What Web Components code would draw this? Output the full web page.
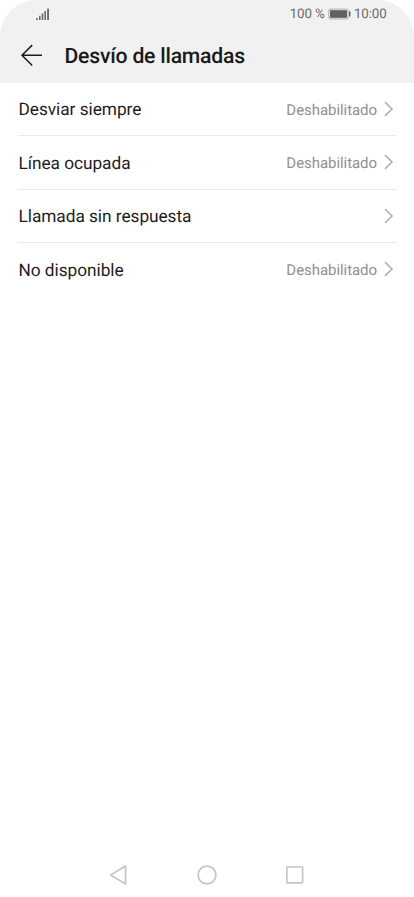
<!DOCTYPE html>
<html lang="es">
<head>
<meta charset="utf-8">
<meta name="viewport" content="width=device-width">
<title>Desvío de llamadas</title>
<style>
html, body { margin: 0; background: #fff; }
body { font-family: Roboto, "Liberation Sans", sans-serif; text-rendering: geometricPrecision; }
</style>
</head>
<body>
<phone-screen>
  <status-bar slot="header" battery="100 %" time="10:00"></status-bar>
  <title-bar slot="header">Desvío de llamadas</title-bar>
  <setting-row value="Deshabilitado">Desviar siempre</setting-row>
  <setting-row value="Deshabilitado">Línea ocupada</setting-row>
  <setting-row>Llamada sin respuesta</setting-row>
  <setting-row value="Deshabilitado">No disponible</setting-row>
  <nav-bar slot="footer"></nav-bar>
</phone-screen>
<script>
function define(name, html) {
  customElements.define(name, class extends HTMLElement {
    connectedCallback() {
      if (this.shadowRoot) return;
      const root = this.attachShadow({ mode: 'open' });
      root.innerHTML = html;
      root.querySelectorAll('[data-attr]').forEach(el => {
        el.textContent = this.getAttribute(el.dataset.attr) || '';
      });
    }
  });
}

define('phone-screen', `
<style>
:host { display: flex; flex-direction: column; width: 414px; height: 897px; background: #fff; overflow: hidden; }
header { height: 82.7px; flex: none; background: #f1f1f1; border-radius: 37px 37px 0 0; }
main { flex: 1; padding: 0 18px; }
</style>
<header><slot name="header"></slot></header>
<main><slot></slot></main>
<slot name="footer"></slot>`);

define('status-bar', `
<style>
:host { display: flex; align-items: center; height: 28px; padding: 0 27.5px 0 36px; box-sizing: border-box; color: #6c6c6c; font-size: 13.3px; letter-spacing: -.13px; line-height: 28px; }
.gap { flex: 1; }
svg { display: block; }
.battery { margin: 0 3.5px 0 3px; }
span { white-space: nowrap; padding-top: 1px; }
</style>
<svg width="14" height="13" viewBox="0 0 14 13" fill="#6a6a6a">
  <rect x="0" y="10.2" width="1.8" height="1.8"/><rect x="3" y="7.8" width="1.6" height="4.2"/>
  <rect x="5.7" y="5.4" width="1.6" height="6.6"/><rect x="8.4" y="3" width="1.6" height="9"/>
  <rect x="11.1" y=".6" width="1.9" height="11.4"/>
</svg>
<div class="gap"></div>
<span data-attr="battery"></span>
<svg class="battery" width="23" height="12" viewBox="0 0 23 12">
  <rect x=".6" y="1" width="19.8" height="10" rx="1.6" fill="#ddd" stroke="#bbb"/>
  <rect x="2" y="2.2" width="17" height="7.6" fill="#606060"/>
  <rect x="21" y="3.2" width="1.5" height="5.6" rx=".7" fill="#666"/>
</svg>
<span data-attr="time"></span>`);

define('title-bar', `
<style>
:host { display: flex; align-items: center; height: 54px; padding-left: 20px; color: #1a1a1a; }
svg { display: block; flex: none; margin-right: 20.5px; }
h1 { margin: 0; padding-top: 3px; font-size: 21.2px; font-weight: 500; letter-spacing: -.22px; line-height: 26px; white-space: nowrap; }
</style>
<svg width="24" height="24" viewBox="0 0 24 24" fill="none" stroke="#1a1a1a" stroke-width="1.5">
  <path d="M22 12.3H2M12.2 2.1L2 12.3L12.2 22.5"/>
</svg>
<h1><slot></slot></h1>`);

define('setting-row', `
<style>
:host { display: flex; align-items: center; height: 53.45px; box-sizing: border-box; border-bottom: 1px solid #e9e9e9; color: #1e1e1e; font-size: 17.3px; letter-spacing: -.05px; line-height: 24px; }
:host(:last-of-type) { border-color: transparent; }
.label { flex: 1; padding: 3px 0 0 .5px; white-space: nowrap; }
.value { color: #919191; font-size: 15px; letter-spacing: -.06px; padding-top: 2px; margin-right: 6px; }
svg { display: block; }
</style>
<div class="label"><slot></slot></div>
<div class="value" data-attr="value"></div>
<svg width="13" height="16" viewBox="0 0 13 16" fill="none" stroke="#b2b2b2" stroke-width="1.6">
  <path d="M2 1.1L9 8L2 14.9"/>
</svg>`);

define('nav-bar', `
<style>
:host { display: flex; justify-content: center; align-items: center; gap: 64px; height: 45px; flex: none; }
svg { display: block; }
</style>
<svg width="24" height="24" viewBox="0 0 24 24" fill="none" stroke="#c5c5c5" stroke-width="1.7" stroke-linejoin="round"><path d="M18.6 3L3.6 12L18.6 21Z"/></svg>
<svg width="24" height="24" viewBox="0 0 24 24" fill="none" stroke="#c5c5c5" stroke-width="1.7"><circle cx="12" cy="12" r="8.9"/></svg>
<svg width="24" height="24" viewBox="0 0 24 24" fill="none" stroke="#c5c5c5" stroke-width="1.7"><rect x="3.8" y="4" width="15.8" height="15.8" rx=".5"/></svg>`);
</script>
</body>
</html>
